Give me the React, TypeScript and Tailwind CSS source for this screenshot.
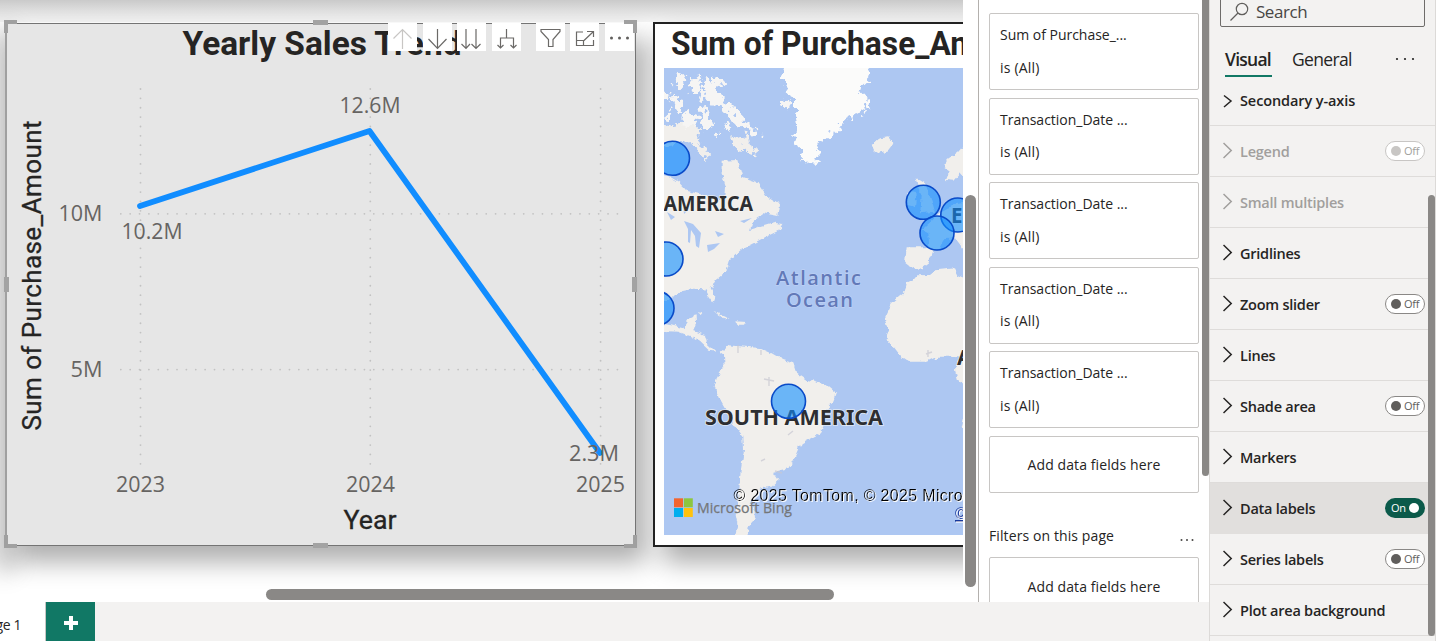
import React from "react";

const filters = [
  "Sum of Purchase_...",
  "Transaction_Date ...",
  "Transaction_Date ...",
  "Transaction_Date ...",
  "Transaction_Date ...",
];

type Row = { label: string; toggle?: "on" | "off"; disabled?: boolean };
const rows: Row[] = [
  { label: "Legend", toggle: "off", disabled: true },
  { label: "Small multiples", disabled: true },
  { label: "Gridlines" },
  { label: "Zoom slider", toggle: "off" },
  { label: "Lines" },
  { label: "Shade area", toggle: "off" },
  { label: "Markers" },
  { label: "Data labels", toggle: "on" },
  { label: "Series labels", toggle: "off" },
  { label: "Plot area background" },
];

const din = "Roboto, sans-serif";
const segoe = "'Open Sans', 'Noto Sans', sans-serif";

function LineChart() {
  return (
    <svg width="628" height="521" viewBox="7 24 628 521" className="block">
      <text x="182.5" y="55" fontFamily={din} fontWeight="700" fontSize="33.5" fill="#252423" textLength="279" lengthAdjust="spacingAndGlyphs">Yearly Sales Trend</text>
      <g stroke="#c2c2c2" strokeWidth="1.8" strokeLinecap="round" strokeDasharray="0 9.37">
        <path d="M140.5 89V465M370.3 89V465M600.6 89V465" />
        <path d="M120.8 213.8H620M120.8 369.6H620" />
      </g>
      <path d="M140 206L369.5 131L600 453" fill="none" stroke="#118dff" strokeWidth="5.8" strokeLinecap="round" strokeLinejoin="round" />
      <g fontFamily={segoe} fontSize="22" fill="#666462">
        <text x="58.5" y="221" textLength="44" lengthAdjust="spacingAndGlyphs">10M</text>
        <text x="70.5" y="377" textLength="32" lengthAdjust="spacingAndGlyphs">5M</text>
        <text x="121.5" y="239" textLength="61" lengthAdjust="spacingAndGlyphs">10.2M</text>
        <text x="339.5" y="113" textLength="61" lengthAdjust="spacingAndGlyphs">12.6M</text>
        <text x="569" y="461" textLength="50" lengthAdjust="spacingAndGlyphs">2.3M</text>
        <text x="116" y="492" textLength="49" lengthAdjust="spacingAndGlyphs">2023</text>
        <text x="346" y="492" textLength="49" lengthAdjust="spacingAndGlyphs">2024</text>
        <text x="576" y="492" textLength="49" lengthAdjust="spacingAndGlyphs">2025</text>
      </g>
      <g fontFamily={din} fontSize="26" fill="#252423" stroke="#252423" strokeWidth="0.3">
        <text x="343.5" y="529" textLength="53" lengthAdjust="spacingAndGlyphs">Year</text>
        <text transform="translate(41 430.5) rotate(-90)" textLength="310" lengthAdjust="spacing">Sum of Purchase_Amount</text>
      </g>
    </svg>
  );
}

const bubbles = [
  [672.5, 158.3], [666, 259], [657, 308.3], [923.3, 202.3], [957.8, 215], [937, 233], [788.5, 401.3],
];

function BubbleMap() {
  return (
    <svg width="299" height="467" viewBox="664 68 299 467" className="block shrink-0">
      <defs>
        <filter id="coast" x="-5%" y="-5%" width="110%" height="110%" colorInterpolationFilters="sRGB">
          <feTurbulence type="fractalNoise" baseFrequency="0.06" numOctaves="2" seed="4" result="n" />
          <feDisplacementMap in="SourceGraphic" in2="n" scale="16" xChannelSelector="R" yChannelSelector="G" />
          <feGaussianBlur stdDeviation="1.6" />
        </filter>
        <filter id="arctic" x="-5%" y="-5%" width="110%" height="110%" colorInterpolationFilters="sRGB">
          <feTurbulence type="fractalNoise" baseFrequency="0.05" numOctaves="3" seed="9" result="n" />
          <feDisplacementMap in="SourceGraphic" in2="n" scale="48" xChannelSelector="R" yChannelSelector="G" />
          <feGaussianBlur stdDeviation="2.2" />
        </filter>
        <filter id="lake" x="-5%" y="-5%" width="110%" height="110%">
          <feGaussianBlur stdDeviation="0.5" />
        </filter>
        <filter id="halo" x="-5%" y="-20%" width="110%" height="150%">
          <feDropShadow dx="1" dy="1" stdDeviation="0" floodColor="#fff" />
        </filter>
      </defs>
      <rect x="664" y="68" width="299" height="467" fill="#adc7f2" />
      <g filter="url(#arctic)" transform="translate(650 0) scale(.33333)" fill="#f1efec">
        <path fill="#fbfbfa" d="M385 160L405 240L412 290L435 300L435 330L442 380L435 410L445 440L455 475L470 492L490 495L505 470L510 430L540 405L568 395L580 365L610 350L652 325L658 300L635 280L625 265L655 235L668 160Z" />
        <path fill="#f6f5f4" d="M165 240L195 245L205 280L250 325L300 378L338 402L310 405L300 396L282 380L268 388L240 350L208 315L165 312L152 275Z" />
        <path d="M250 410L278 404L296 412L300 430L318 440L316 465L300 468L285 450L252 446Z" />
        <path d="M20 385L125 362L150 398L145 430L158 440L180 462L172 478L148 452L130 440L118 425L100 428L20 440Z" />
        <path fill="#f6f5f4" d="M80 220L115 235L92 265L68 245ZM125 228L155 235L145 290L122 270ZM62 290L98 298L94 332L66 322ZM185 225L232 243L218 258L190 247ZM155 318L175 340L187 382L160 394L148 350ZM223 368L242 373L234 392ZM100 335L140 348L135 378L95 372ZM20 262L62 278L52 304L20 290ZM396 298L422 308L414 332L396 318ZM175 262L188 258L190 300L176 298ZM45 335L70 345L60 358L44 352ZM190 400L202 398L200 410L190 412Z" />
      </g>
      <g filter="url(#coast)" transform="translate(650 0) scale(.33333)" fill="#f1efec">
        <path d="M20 520L60 530L85 545L110 572L180 590L225 605L228 560L215 520L215 482L262 480L277 530L320 545L350 590L390 615L385 648L340 640L310 660L300 690L375 668L400 672L390 690L345 712L310 730L275 748L240 780L230 812L195 842L182 864L196 890L190 908L175 888L165 868L130 866L95 874L75 885L60 900L20 900Z" />
        <path d="M20 970L60 975L100 985L118 955L137 946L138 968L130 992L165 1005L171 1030L198 1055L178 1052L150 1025L120 1008L85 995L20 992Z" />
        <path d="M190 932L225 948L235 956L218 954ZM256 964L290 966L285 974L260 974ZM142 940L160 942L155 948Z" />
        <path d="M665 435L690 415L715 412L730 430L715 450L685 460L672 450Z" />
        <path d="M960 415L925 455L890 480L885 500L900 510L888 540L910 542L930 520L960 555Z" />
        <path d="M800 535L825 550L845 600L855 635L810 640L815 590ZM775 575L800 580L795 620L772 615Z" />
        <path d="M870 640L920 610L960 600L960 780L935 740L915 715L880 718L865 748L850 752L835 790L815 805L790 808L765 788L770 742L838 742L835 700L815 690Z" />
        <path d="M790 840L802 826L840 825L858 811L915 805L925 825L960 840L960 1075L905 1070L860 1070L830 1085L780 1085L750 1065L715 1020L705 1010L715 990L706 950L725 910L765 875L770 850Z" />
        <path d="M960 1060L925 1085L915 1110L922 1135L960 1170Z" />
        <path d="M225 1045L235 1036L330 1044L365 1060L400 1080L430 1090L440 1120L470 1140L530 1155L560 1180L550 1205L528 1230L522 1275L510 1300L455 1330L440 1365L415 1405L370 1415L386 1440L365 1460L332 1465L320 1485L302 1510L314 1535L315 1560L296 1580L290 1620L255 1620L262 1570L256 1540L267 1480L272 1410L282 1350L280 1310L253 1275L210 1200L194 1160L205 1120L226 1090L225 1065L212 1055Z" />
        <path d="M943 1250L960 1230L960 1300L935 1280Z" />
      </g>
      <g filter="url(#lake)" fill="#adc7f2">
        <path d="M684 221L693 224L701 233L699 248L696 246L695 236L691 230L690 243L688 242L688 229ZM707 245L720 243L714 249L708 252ZM715 231L724 234L718 237ZM667 212L675 217L671 220ZM683 205L687 211L684 214ZM740 221L752 218L744 223Z" />
      </g>
      <g stroke="#c8c8d2" strokeWidth="1.4" fill="none" opacity=".7">
        <path d="M764 379L774 381M769 377V386M788 435L793 431M761 461L765 459M926 354L932 352M928 350V357M738 345V353M761 350V355M775 471L782 473" />
      </g>
      <g fontFamily="'Noto Sans', 'Open Sans', sans-serif" fontWeight="700" fill="#2d2e31" stroke="#f7f7f5" strokeWidth="1.6" strokeOpacity=".7" paintOrder="stroke" fontSize="20.5">
        <text x="588" y="211" textLength="165" lengthAdjust="spacingAndGlyphs">NORTH AMERICA</text>
        <text x="705" y="425" textLength="178" lengthAdjust="spacingAndGlyphs">SOUTH AMERICA</text>
        <text x="951" y="223">EUROPE</text>
        <text x="957" y="365">AFRICA</text>
      </g>
      <g fontFamily={segoe} fontWeight="600" fontSize="20" fill="#6279b8" stroke="#c5d5f7" strokeWidth="1" paintOrder="stroke">
        <text x="776" y="285" textLength="85">Atlantic</text>
        <text x="786" y="307" textLength="67">Ocean</text>
      </g>
      <g fill="#118dff" fillOpacity=".6" stroke="#0a4bc8" strokeWidth="1.6">
        {bubbles.map(([x, y]) => (
          <circle key={x} cx={x} cy={y} r="17" />
        ))}
      </g>
      <path fill="#f26530" d="M674 498.3h9v9h-9z" />
      <path fill="#8dc63f" d="M683.8 498.3h9v9h-9z" />
      <path fill="#00aeef" d="M674 508h9v9h-9z" />
      <path fill="#ffc20e" d="M683.8 508h9v9h-9z" />
      <text x="697" y="513" fontFamily={segoe} fontWeight="500" fontSize="14.5" fill="#747679" stroke="#747679" strokeWidth=".25" textLength="95" lengthAdjust="spacingAndGlyphs">Microsoft Bing</text>
      <g fontFamily="'Liberation Sans', Arial, sans-serif" fontSize="16" filter="url(#halo)">
        <text x="733.5" y="501" fill="#000" textLength="353">© 2025 TomTom, © 2025 Microsoft Corporation,</text>
        <text x="955" y="519" fill="#17389c" textDecoration="underline">© OpenStreetMap</text>
      </g>
    </svg>
  );
}

const tools = [
  { d: "M14.5 26V7M5.5 15.5L14.5 6.5L23.5 15.5", color: "#c8c6c4" },
  { d: "M14.5 6V25M5.5 16L14.5 25.5L23.5 16", color: "#6b6967" },
  { d: "M9 6V25M4.5 21L9 25.5L13 21M19 6V25M14.5 21L19 25.5L23.5 21", color: "#6b6967" },
  { d: "M14.5 6V15M8.5 25V15H21.5V25M5.5 22L8.5 25L11.5 22M18.5 22L21.5 25L24.5 22", color: "#6b6967" },
  { d: "M5 6.5H24V8.5L17 16.5V23.5H12.5V16.5L5 8.5Z", color: "#6b6967" },
  { d: "M13 9H6.5V22.5H23.5V17M6.5 17.5H13.5V22.5M14 17.5L23.5 8.5M17 8.5H23.5V14", color: "#6b6967" },
];

function Toolbar() {
  return (
    <div className="absolute right-[1px] top-[-1px] flex gap-[5.6px]">
      {tools.map((t, i) => (
        <div key={i} className={i === 4 ? "ml-[9.5px] h-7 w-[29px] bg-white" : "h-7 w-[29px] bg-white"}>
          <svg width="29" height="28" viewBox="0 0 29 28" fill="none" stroke={t.color} strokeWidth="1.2">
            <path d={t.d} />
          </svg>
        </div>
      ))}
      <div className="h-7 w-[29px] bg-white">
        <svg width="29" height="28" viewBox="0 0 29 28" fill="#605e5c">
          <circle cx="6.5" cy="15" r="1.5" />
          <circle cx="14.5" cy="15" r="1.5" />
          <circle cx="22.5" cy="15" r="1.5" />
        </svg>
      </div>
    </div>
  );
}

function Handles() {
  return (
    <>
      <i className="absolute -left-[2px] -top-[1px] h-full w-[2px] bg-[#a0a0a0]" />
      <i className="absolute -left-[3px] -top-[4px] size-[13px] border-l-4 border-t-4 border-[#a0a0a0]" />
      <i className="absolute -right-[2px] -top-[4px] size-[13px] border-r-4 border-t-4 border-[#a0a0a0]" />
      <i className="absolute -bottom-[3px] -left-[3px] size-[13px] border-b-4 border-l-4 border-[#a0a0a0]" />
      <i className="absolute -bottom-[3px] -right-[2px] size-[13px] border-b-4 border-r-4 border-[#a0a0a0]" />
      <i className="absolute -top-[4px] left-[306px] h-[5px] w-[15px] bg-[#a3a3a3]" />
      <i className="absolute -bottom-[3px] left-[306px] h-[5px] w-[15px] bg-[#a3a3a3]" />
      <i className="absolute -left-[3px] top-[253px] h-[15px] w-[5px] bg-[#a3a3a3]" />
      <i className="absolute -right-[2px] top-[253px] h-[15px] w-[5px] bg-[#a3a3a3]" />
    </>
  );
}

function Toggle({ on, disabled }: { on?: boolean; disabled?: boolean }) {
  if (on)
    return (
      <span className="flex h-5 w-10 items-center gap-[3px] rounded-full bg-[#0b5a4a] pl-1.5 text-[11px] tracking-[-0.3px] text-white">
        On<i className="size-[10px] rounded-full bg-white" />
      </span>
    );
  return (
    <span
      className={
        disabled
          ? "flex h-5 w-10 items-center gap-[3px] rounded-full border border-[#c8c6c4] bg-white pl-[5px] text-[11px] tracking-[-0.3px] text-[#a19f9d]"
          : "flex h-5 w-10 items-center gap-[3px] rounded-full border border-[#8a8886] bg-white pl-[5px] text-[11px] tracking-[-0.3px] text-[#605e5c]"
      }
    >
      <i className={disabled ? "size-[10px] rounded-full bg-[#c8c6c4]" : "size-[10px] rounded-full bg-[#605e5c]"} />
      Off
    </span>
  );
}

function Chevron({ small }: { small?: boolean }) {
  return (
    <svg width="12" height="18" viewBox="0 0 12 18" fill="none" stroke="currentColor" strokeWidth="1.5">
      <path d={small ? "M1 3.5L8 9L1 15" : "M.5 1L8.2 8.5L.5 16"} />
    </svg>
  );
}

function FormatPane() {
  return (
    <aside className="relative flex h-full w-[227px] shrink-0 flex-col overflow-hidden border-x border-[#dcdad8] bg-[#f3f2f1] text-[#252423]">
      <div className="ml-2.5 -mt-[5px] flex h-8 w-[205px] shrink-0 items-center rounded-[2px] border border-[#6e6c6a] pl-2 text-[#484644]">
        <svg width="20" height="20" viewBox="0 0 20 20" fill="none" stroke="#605e5c" strokeWidth="1.2" className="mt-0.5">
          <circle cx="13" cy="7" r="5.7" />
          <path d="M9 11L1.5 18.5" />
        </svg>
        <span className="ml-[7px] mt-[2px] text-[17px] tracking-[-0.45px]">Search</span>
      </div>
      <div className="flex h-[50px] shrink-0 pl-[15px] pt-[19px] text-[17.5px] leading-[26px]">
        <span className="h-[31px] w-[47px] whitespace-nowrap border-b-2 border-[#117865] font-semibold tracking-[-0.75px]">Visual</span>
        <span className="ml-5 w-[60px] whitespace-nowrap tracking-[-0.65px]">General</span>
        <svg width="20" height="4" viewBox="0 0 20 4" fill="#252423" className="ml-[43px] mt-[11px]">
          <circle cx="2" cy="2" r="1.1" />
          <circle cx="10" cy="2" r="1.1" />
          <circle cx="18" cy="2" r="1.1" />
        </svg>
      </div>
      <div className="flex h-[49px] shrink-0 items-center border-b border-[#dedcda] pl-[13px] text-[14.5px] font-semibold tracking-[-0.1px]">
        <Chevron small />
        <span className="ml-[5px]">Secondary y-axis</span>
      </div>
      {rows.map((r) => (
        <div
          key={r.label}
          className={
            r.toggle === "on"
              ? "flex h-[51px] shrink-0 items-center border-b border-[#e1dfdd] bg-[#e1dfdd] pl-[13px] pr-2.5"
              : r.disabled
                ? "flex h-[51px] shrink-0 items-center border-b border-[#dedcda] pl-[13px] pr-2.5 text-[#a19f9d]"
                : "flex h-[51px] shrink-0 items-center border-b border-[#dedcda] pl-[13px] pr-2.5"
          }
        >
          <Chevron />
          <span className="ml-[5px] mt-[2px] grow text-[14.5px] font-semibold tracking-[-0.24px]">{r.label}</span>
          {r.toggle && <Toggle on={r.toggle === "on"} disabled={r.disabled} />}
        </div>
      ))}
      <i className="absolute right-0 top-[195px] h-[441px] w-[7px] rounded-full bg-[#8a8886]" />
    </aside>
  );
}

function FilterPane() {
  return (
    <aside className="relative h-full w-[231px] shrink-0 overflow-hidden border-l border-[#b3b0ad] bg-white pl-2.5 pt-[13px] text-[14px] tracking-[-0.02px] text-[#252423]">
      <div className="flex w-[210px] flex-col gap-[7.5px]">
        {filters.map((f, i) => (
          <div key={i} className="h-[77px] rounded-[2px] border border-[#c8c6c4] pl-2.5 pt-[11px] leading-5">
            <div>{f}</div>
            <div className="mt-[12.6px] tracking-[0.2px]">is (All)</div>
          </div>
        ))}
        <div className="flex h-[57px] items-center justify-center rounded-[2px] border border-[#c8c6c4] tracking-[0.1px]">Add data fields here</div>
      </div>
      <div className="mt-[33px] flex w-[210px] justify-between pr-[5px] leading-5">
        <span className="tracking-[0.1px]">Filters on this page</span>
        <svg width="14" height="4" viewBox="0 0 14 4" fill="#484644" className="mt-3">
          <circle cx="1.5" cy="2" r="1" />
          <circle cx="7" cy="2" r="1" />
          <circle cx="12.5" cy="2" r="1" />
        </svg>
      </div>
      <div className="mt-[11px] flex h-[59px] w-[210px] items-center justify-center rounded-[2px] border border-[#c8c6c4] tracking-[0.1px]">Add data fields here</div>
      <i className="absolute right-0 top-0 h-[476px] w-[7px] rounded-b-full bg-[#8a8886]" />
    </aside>
  );
}

function Canvas() {
  return (
    <section className="relative h-full w-[978px] shrink-0 overflow-hidden bg-white">
      <div className="h-full w-[963px] overflow-hidden">
        <div className="flex h-[22px] bg-gradient-to-b from-[#cacaca] to-[#f5f5f5]" />
        <div className="flex w-[1300px]">
          <div className="mr-[6px] h-[525px] w-0 shadow-[4px_16px_24px_8px_rgba(0,0,0,0.3)]" />
          <div className="relative mt-px h-[523px] w-[630px] shrink-0 border border-[#747474] bg-[#e6e6e6] shadow-[10px_16px_24px_rgba(0,0,0,0.32)]">
            <LineChart />
            <Toolbar />
            <Handles />
          </div>
          <div className="relative ml-[17px] h-[525px] w-[630px] shrink-0 overflow-hidden border-2 border-[#222] bg-white shadow-[10px_16px_24px_rgba(0,0,0,0.32)]">
            <div className="h-[44px] pl-4">
              <svg width="400" height="44" viewBox="671 24 400 44" className="block overflow-visible">
                <text x="671" y="54.5" fontFamily={din} fontWeight="700" fontSize="33.5" fill="#252423" textLength="371" lengthAdjust="spacingAndGlyphs">Sum of Purchase_Amount</text>
              </svg>
            </div>
            <div className="pl-[9px]">
              <BubbleMap />
            </div>
          </div>
        </div>
      </div>
      <i className="absolute left-[266px] top-[589px] h-[11px] w-[568px] rounded-full bg-[#8a8886]" />
      <i className="absolute left-[965px] top-[195px] h-[392px] w-[11px] rounded-full bg-[#8a8886]" />
    </section>
  );
}

export default function App() {
  return (
    <div className="flex h-[641px] w-[1436px] overflow-hidden bg-white font-['Open_Sans','Noto_Sans',sans-serif]">
      <main className="flex w-[1209px] shrink-0 flex-col">
        <div className="flex h-[602px] shrink-0">
          <Canvas />
          <FilterPane />
        </div>
        <footer className="flex h-[39px] bg-[#f3f2f1]">
          <div className="flex w-[46px] items-center justify-end overflow-hidden whitespace-nowrap border-r border-[#c8c6c4] bg-white pr-6 pt-1.5 text-[14px] font-medium tracking-[-0.4px] text-[#252423]">Page 1</div>
          <div className="flex w-[49px] items-center justify-center bg-[#117865]">
            <svg width="14" height="14" viewBox="0 0 14 14" className="mt-0.5" stroke="#fff" strokeWidth="4">
              <path d="M7 0V14M0 7H14" />
            </svg>
          </div>
        </footer>
      </main>
      <FormatPane />
    </div>
  );
}
